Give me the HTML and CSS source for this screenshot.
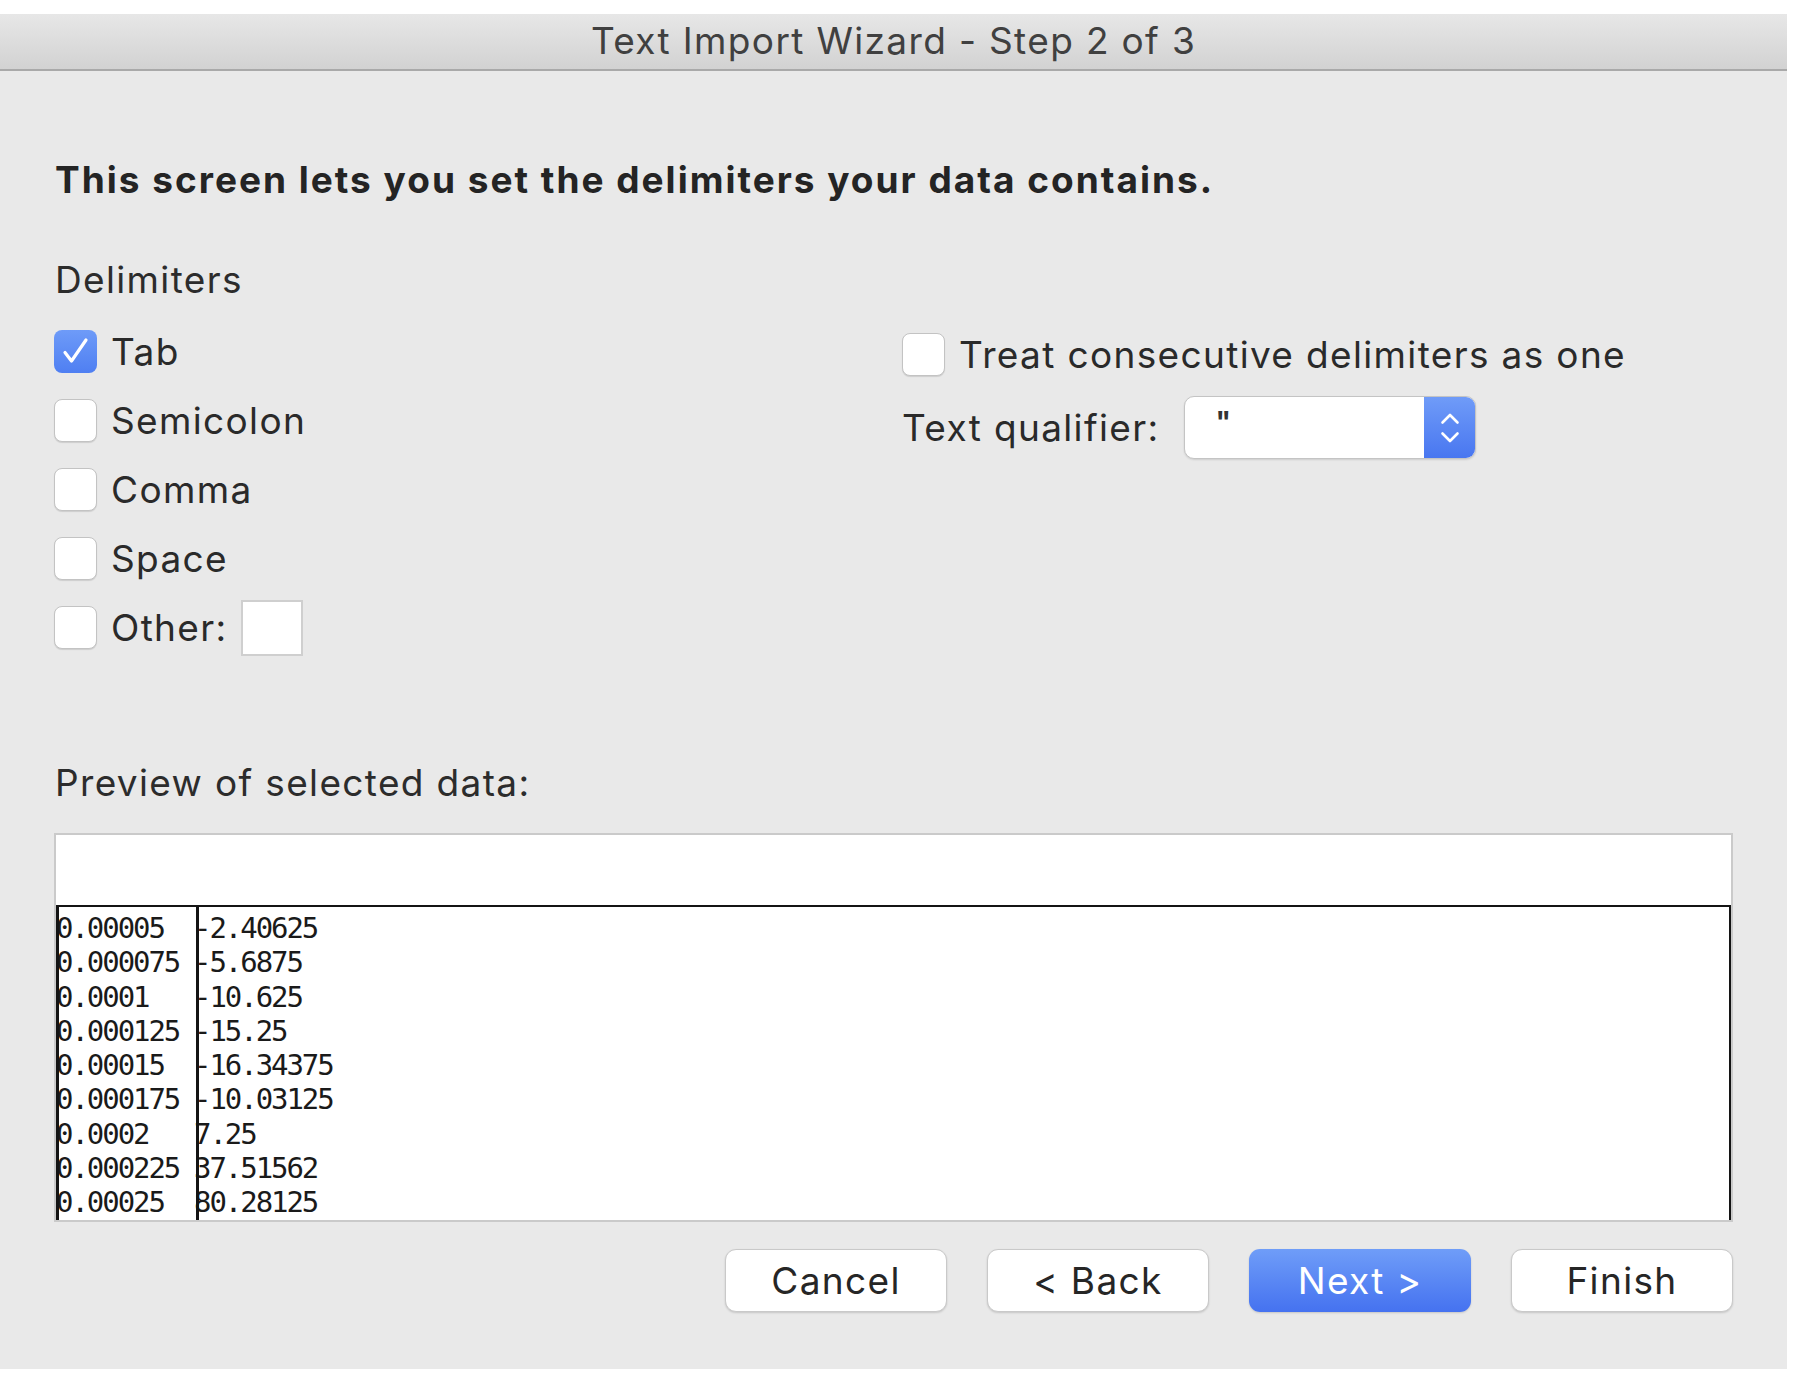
FILE: index.html
```html
<!DOCTYPE html>
<html lang="en">
<head>
<meta charset="utf-8">
<title>Text Import Wizard - Step 2 of 3</title>
<link rel="stylesheet" href="styles.css">
</head>
<body>
<div class="window">
  <div class="titlebar">Text Import Wizard - Step 2 of 3</div>
  <div class="content">
    <h1 class="heading">This screen lets you set the delimiters your data contains.</h1>
    <div class="section-label">Delimiters</div>
    <div class="options">
      <div class="col-left">
        <div class="check-row">
          <span class="box checked"><svg viewBox="0 0 43 43" width="43" height="43"><path d="M11 22.5 L17.5 31 L32 10" fill="none" stroke="#fff" stroke-width="3.2" stroke-linecap="round" stroke-linejoin="round"/></svg></span>
          <span class="label">Tab</span>
        </div>
        <div class="check-row"><span class="box"></span><span class="label">Semicolon</span></div>
        <div class="check-row"><span class="box"></span><span class="label">Comma</span></div>
        <div class="check-row"><span class="box"></span><span class="label">Space</span></div>
        <div class="check-row"><span class="box"></span><span class="label">Other:</span><span class="other-input"></span></div>
      </div>
      <div class="col-right">
        <div class="check-row"><span class="box"></span><span class="label">Treat consecutive delimiters as one</span></div>
        <div class="qualifier-row">
          <span class="label">Text qualifier:</span>
          <div class="select">
            <span class="select-value">"</span>
            <span class="select-arrows"><svg viewBox="0 0 52 63" width="52" height="63"><path d="M18.5 26.5 L26 19 L33.5 26.5 M18.5 37.5 L26 45 L33.5 37.5" fill="none" stroke="#fff" stroke-width="2.6" stroke-linecap="round" stroke-linejoin="round"/></svg></span>
          </div>
        </div>
      </div>
    </div>
    <div class="preview-label">Preview of selected data:</div>
    <div class="preview">
      <div class="preview-header"></div>
      <div class="preview-data">
        <div class="pcol c1">
          <div class="prow">0.00005</div>
          <div class="prow">0.000075</div>
          <div class="prow">0.0001</div>
          <div class="prow">0.000125</div>
          <div class="prow">0.00015</div>
          <div class="prow">0.000175</div>
          <div class="prow">0.0002</div>
          <div class="prow">0.000225</div>
          <div class="prow">0.00025</div>
        </div>
        <div class="pcol c2">
          <div class="prow">-2.40625</div>
          <div class="prow">-5.6875</div>
          <div class="prow">-10.625</div>
          <div class="prow">-15.25</div>
          <div class="prow">-16.34375</div>
          <div class="prow">-10.03125</div>
          <div class="prow">7.25</div>
          <div class="prow">37.51562</div>
          <div class="prow">80.28125</div>
        </div>
      </div>
    </div>
    <div class="buttons">
      <button class="btn">Cancel</button>
      <button class="btn">&lt; Back</button>
      <button class="btn primary">Next &gt;</button>
      <button class="btn">Finish</button>
    </div>
  </div>
</div>
</body>
</html>
```

FILE: styles.css
```css
* { box-sizing: border-box; }

html, body {
  margin: 0;
  padding: 0;
  background: #ffffff;
}

body {
  font-family: Inter, "Noto Sans", "Liberation Sans", sans-serif;
  color: #262626;
  padding-top: 14px;
}

.window {
  width: 1787px;
  background: #e9e9e9;
}

.titlebar {
  height: 57px;
  line-height: 53px;
  text-align: center;
  font-size: 37px;
  letter-spacing: 1.35px;
  color: #404040;
  background: linear-gradient(#e7e7e7, #d2d2d2);
  border-bottom: 2px solid #a9a9a9;
}

.content {
  padding: 87px 54px 57px 54px;
}

.heading {
  margin: 0 0 0 1px;
  font-size: 37px;
  line-height: 44px;
  font-weight: 700;
  letter-spacing: 2px;
  color: #242424;
}

.section-label {
  margin: 56px 0 0 1px;
  font-size: 37px;
  line-height: 44px;
  letter-spacing: 1.35px;
  color: #2c2c2c;
}

.options {
  margin-top: 28px;
  display: grid;
  grid-template-columns: 848px 1fr;
}

.col-left {
  display: flex;
  flex-direction: column;
  gap: 26px;
}

.col-right {
  margin-top: 3px;
  display: flex;
  flex-direction: column;
  gap: 20px;
}

.check-row {
  height: 43px;
  display: flex;
  align-items: center;
}

.label {
  font-size: 37px;
  line-height: 44px;
  letter-spacing: 1.35px;
  color: #2a2a2a;
  white-space: nowrap;
}

.box {
  flex: none;
  width: 43px;
  height: 43px;
  margin-right: 14px;
  border-radius: 8px;
  background: #ffffff;
  border: 1px solid #c3c3c3;
  box-shadow: 0 1px 1px rgba(0,0,0,0.12);
}

.box svg { display: block; margin: -1px; }

.box.checked {
  border: none;
  background: linear-gradient(#6e9bf8, #4f7ff2);
  box-shadow: none;
}

.box.checked svg { margin: 0; }

.other-input {
  flex: none;
  width: 62px;
  height: 56px;
  margin-left: 13px;
  background: #ffffff;
  border: 2px solid #cfcfcf;
}

.qualifier-row {
  display: flex;
  align-items: center;
  gap: 25px;
}

.select {
  width: 292px;
  height: 63px;
  display: flex;
  border-radius: 10px;
  background: #ffffff;
  border: 1px solid #c4c4c4;
  box-shadow: 0 1px 2px rgba(0,0,0,0.12);
  overflow: hidden;
}

.select-value {
  flex: 1;
  padding-left: 30px;
  font-size: 28px;
  line-height: 50px;
  font-weight: 700;
  color: #333;
}

.select-arrows {
  flex: none;
  width: 52px;
  margin: -1px -1px -1px 0;
  background: linear-gradient(#709cf8, #4876f0);
}

.select-arrows svg { display: block; }

.preview-label {
  margin: 112px 0 0 1px;
  font-size: 37px;
  line-height: 44px;
  letter-spacing: 1.35px;
  color: #2c2c2c;
}

.preview {
  margin-top: 28px;
  height: 389px;
  background: #ffffff;
  border: 2px solid #cacaca;
  display: flex;
  flex-direction: column;
}

.preview-header {
  height: 70px;
  flex: none;
}

.preview-data {
  flex: 1;
  display: flex;
  border-top: 2px solid #141414;
  border-right: 2px solid #141414;
  font-family: "DejaVu Sans Mono", "Liberation Mono", monospace;
  font-size: 29px;
  letter-spacing: -2.05px;
  color: #1a1a1a;
  padding-top: 4px;
  overflow: hidden;
}

.pcol {
  position: relative;
  margin-top: -4px;
  padding-top: 4px;
}

.pcol::before {
  content: "";
  position: absolute;
  left: 0;
  top: 0;
  bottom: 0;
  width: 3px;
  background: #141414;
}

.c1 { width: 140px; flex: none; }
.c2 { flex: 1; }
.c2 .prow { text-indent: -2px; }

.prow {
  height: 34.25px;
  line-height: 34.25px;
  white-space: pre;
}

.buttons {
  margin-top: 27px;
  display: flex;
  justify-content: flex-end;
  gap: 40px;
}

.btn {
  width: 222px;
  height: 63px;
  border-radius: 11px;
  border: 1px solid #c9c9c9;
  background: #ffffff;
  box-shadow: 0 1px 2px rgba(0,0,0,0.15);
  font-family: Inter, "Noto Sans", "Liberation Sans", sans-serif;
  font-size: 37px;
  letter-spacing: 1.35px;
  color: #262626;
  padding: 0;
}

.btn.primary {
  border: none;
  background: linear-gradient(#6f9df8, #4572f0);
  color: #ffffff;
}
```
